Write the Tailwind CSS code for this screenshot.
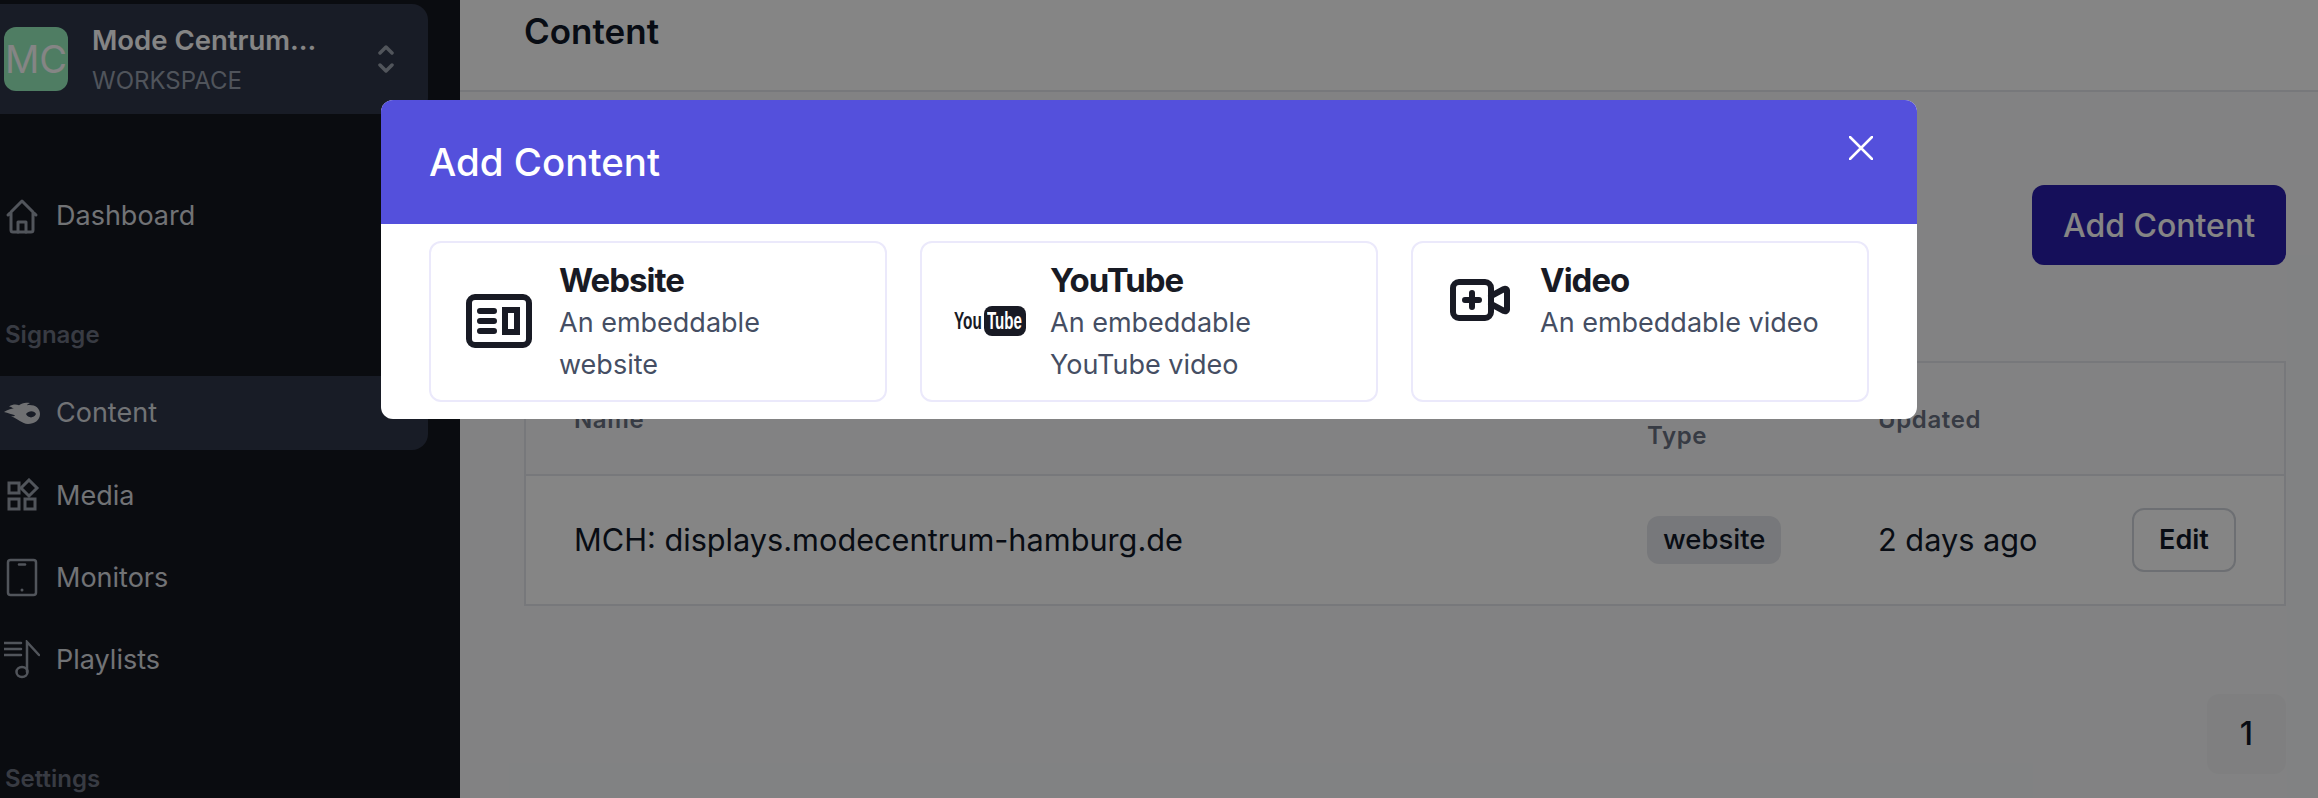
<!DOCTYPE html>
<html lang="en">
<head>
    <meta charset="UTF-8">
    <meta name="viewport" content="width=device-width, initial-scale=1.0">
    <title>Content</title>
    <script src="https://cdn.jsdelivr.net/npm/@tailwindcss/browser@4"></script>
</head>
<body class="font-['Inter',sans-serif] overflow-hidden">
    <div class="relative flex h-[798px] w-[2318px] overflow-hidden bg-[#f9fafb]">
        <!-- Sidebar -->
        <aside class="w-[460px] h-full shrink-0 bg-[#15171f] pt-[4px] pr-[32px]">
            <div class="h-[110px] flex items-center bg-[#2e3649] rounded-r-2xl pl-[4px]">
                <div class="w-16 h-16 rounded-xl bg-[#98f0be] flex items-center justify-center text-white text-[38px] shrink-0">MC</div>
                <div class="ml-[24px] flex-1">
                    <div class="text-white font-semibold text-[27.5px] leading-[38px]">Mode Centrum...</div>
                    <div class="text-gray-400 text-[24px] leading-[34px] mt-[5px]">WORKSPACE</div>
                </div>
                <svg class="w-[16px] h-[28px] mr-[34px]" viewBox="0 0 16 28" fill="none" stroke="#9ca3af" stroke-width="3.5" stroke-linecap="round" stroke-linejoin="round"><path d="M2 8l6-6 6 6M2 20l6 6 6-6"/></svg>
            </div>

            <nav class="mt-[65px] text-[#d9dce1] text-[27px]">
                <a class="h-[74px] flex items-center gap-4 pl-[4px]">
                    <svg class="w-9 h-9" viewBox="0 0 36 36" fill="none" stroke="#9ca3af" stroke-width="3" stroke-linejoin="round" stroke-linecap="round"><path d="M4 17L18 3l14 14M7 14v18a2 2 0 0 0 2 2h18a2 2 0 0 0 2-2V14"/><path d="M14 34V24h8v10"/></svg>
                    Dashboard
                </a>

                <div class="mt-[65px] mb-[24px] pl-[5px] h-[34px] leading-[34px] text-[#6b7280] font-semibold text-[24px]">Signage</div>

                <a class="h-[74px] flex items-center gap-4 pl-[4px] bg-[#2e3649] rounded-r-2xl">
                    <svg class="w-9 h-[22px]" viewBox="0 0 36 20" fill="#d5d7db" preserveAspectRatio="none"><path fill-rule="evenodd" d="M0 9C5 7 7 6 10 6C8 5 7 4 5 4C9 2 12 2 15 3C18 1 21 0 26 1C24 2 23 2.5 23 3C30 2 36 5 36 11C36 17 30 20 24 20C18 20 14 15 7 13C9 13 10 13 11 12C8 11 4 10 0 9ZM22 11C24 15 30 15 32 11C31 8 25 7 22 11Z"/></svg>
                    Content
                </a>

                <a class="mt-[9px] h-[74px] flex items-center gap-4 pl-[4px]">
                    <svg class="w-9 h-9" viewBox="0 0 36 36" fill="none" stroke="#9ca3af" stroke-width="3"><rect x="5" y="5" width="10" height="10"/><path d="M25 2l8 8-8 8-8-8z"/><rect x="5" y="21" width="10" height="10"/><rect x="21" y="21" width="10" height="10"/></svg>
                    Media
                </a>

                <a class="mt-[8px] h-[74px] flex items-center gap-4 pl-[4px]">
                    <svg class="w-9 h-[40px]" viewBox="0 0 36 40" fill="none" stroke="#9ca3af" stroke-width="2.5"><rect x="4" y="2" width="28" height="35" rx="2.5"/><path d="M15 6.5h6" stroke-linecap="round"/><circle cx="18" cy="32" r="1.5" fill="#9ca3af" stroke="none"/></svg>
                    Monitors
                </a>

                <a class="mt-[8px] h-[74px] flex items-center gap-4 pl-[4px]">
                    <svg class="w-9 h-[40px]" viewBox="0 0 36 40" fill="none" stroke="#9ca3af" stroke-width="2.5" stroke-linecap="round"><path d="M0 3h17M0 9h17M0 15h17"/><path d="M23 32V2l12 13"/><ellipse cx="18" cy="32" rx="5.5" ry="5"/></svg>
                    Playlists
                </a>

                <div class="mt-[65px] pl-[5px] h-[34px] leading-[34px] text-[#6b7280] font-semibold text-[24px]">Settings</div>
            </nav>
        </aside>

        <!-- Main -->
        <main class="flex-1 flex flex-col min-w-0">
            <header class="h-[92px] bg-white border-b-2 border-gray-200 pl-[64px] pt-[10px]">
                <h1 class="text-[35px] leading-[42px] font-semibold text-gray-900">Content</h1>
            </header>

            <div class="flex flex-col pl-[64px] pr-[32px]">
                <button class="self-end mt-[93px] w-[254px] h-[80px] pt-[2px] rounded-xl bg-[#2a1dad] text-white text-[32px] font-medium">Add Content</button>

                <div class="mt-[96px] border-2 border-gray-200 bg-white text-gray-900">
                    <div class="h-[113px] grid grid-cols-[1073px_231px_1fr] pl-[48px] bg-[#f9fafb] border-b-2 border-gray-200 text-gray-500 font-semibold text-[24px] tracking-wide leading-[30px]">
                        <div class="pt-[42px]">Name</div>
                        <div class="pt-[58px]">Type</div>
                        <div class="pt-[42px]">Updated</div>
                    </div>
                    <div class="h-[128px] grid grid-cols-[1073px_231px_1fr_auto] items-center pl-[48px] pr-[48px]">
                        <div class="text-[30.7px]">MCH: displays.modecentrum-hamburg.de</div>
                        <div><span class="inline-flex items-center h-[48px] px-4 rounded-xl bg-gray-200 text-[27.5px] font-medium">website</span></div>
                        <div class="text-[30.7px]">2 days ago</div>
                        <button class="w-[104px] h-[64px] rounded-xl border-2 border-gray-300 text-[27px] font-semibold">Edit</button>
                    </div>
                </div>

                <div class="self-end mt-[88px] w-[79px] h-[80px] rounded-xl bg-gray-100 flex items-center justify-center text-[32px] font-medium text-gray-900">1</div>
            </div>
        </main>

        <!-- Modal overlay -->
        <div class="absolute inset-0 bg-black/[.48]">
            <div class="absolute left-[381px] top-[100px] w-[1536px] h-[319px] bg-white rounded-xl overflow-hidden">
                <div class="h-[124px] bg-[#5450dc] flex items-center pl-[48px] pt-[2px]">
                    <h2 class="text-white text-[38.5px] font-medium">Add Content</h2>
                </div>
                <button class="absolute left-[1468px] top-[36px]">
                    <svg class="w-6 h-6" viewBox="0 0 24 24" fill="none" stroke="#fff" stroke-width="2.5" stroke-linecap="round"><path d="M1 1l22 22M23 1L1 23"/></svg>
                </button>

                <div class="grid grid-cols-3 gap-[33px] pl-[48px] pr-[48px] pt-[17px]">
                    <div class="h-[161px] border-2 border-[#ebe9fb] rounded-xl flex items-start pl-[28px] pt-[16px]">
                        <div class="flex items-center">
                            <div class="w-20 flex justify-center mb-[4px]">
                                <svg class="w-[66px] h-[54px]" viewBox="0 0 66 54" fill="none" stroke="#181a24" stroke-width="6"><rect x="3" y="3" width="60" height="48" rx="6"/><path d="M14 17h14M14 27h14M14 37h14" stroke-width="6" stroke-linecap="round"/><rect x="39" y="16" width="12" height="22"/></svg>
                            </div>
                            <div class="ml-[20px]">
                                <div class="text-[33px] leading-[43px] font-bold tracking-[-0.03em] text-[#181a24]">Website</div>
                                <div class="text-[27px] leading-[42px] text-[#454e63] w-[260px]">An embeddable website</div>
                            </div>
                        </div>
                    </div>

                    <div class="h-[161px] border-2 border-[#ebe9fb] rounded-xl flex items-start pl-[28px] pt-[16px]">
                        <div class="flex items-center">
                            <div class="w-20 flex justify-center mb-[4px]">
                                <div class="w-[72px] h-[30px] flex items-center font-['Liberation_Sans',sans-serif] font-bold text-[24px] leading-[30px]">
                                    <span class="inline-block w-[30px] whitespace-nowrap origin-left scale-x-[0.64] text-[#181a24]">You</span>
                                    <span class="inline-block w-[42px] h-[30px] rounded-lg bg-[#181a24] pl-[3px]"><span class="inline-block whitespace-nowrap origin-left scale-x-[0.63] text-white">Tube</span></span>
                                </div>
                            </div>
                            <div class="ml-[20px]">
                                <div class="text-[33px] leading-[43px] font-bold tracking-[-0.03em] text-[#181a24]">YouTube</div>
                                <div class="text-[27px] leading-[42px] text-[#454e63] w-[260px]">An embeddable YouTube video</div>
                            </div>
                        </div>
                    </div>

                    <div class="h-[161px] border-2 border-[#ebe9fb] rounded-xl flex items-start pl-[27px] pt-[16px]">
                        <div class="flex items-center">
                            <div class="w-20 flex justify-center mb-[4px]">
                                <svg class="w-[60px] h-[42px]" viewBox="0 0 60 42" fill="none" stroke="#181a24" stroke-width="6" stroke-linecap="round" stroke-linejoin="round"><rect x="3" y="3" width="38" height="36" rx="6"/><path d="M41 17l13-7a2 2 0 0 1 3 2v18a2 2 0 0 1-3 2l-13-7"/><path d="M22 14v14M15 21h14"/></svg>
                            </div>
                            <div class="ml-[20px]">
                                <div class="text-[33px] leading-[43px] font-bold tracking-[-0.03em] text-[#181a24]">Video</div>
                                <div class="text-[27px] leading-[42px] text-[#454e63]">An embeddable video</div>
                            </div>
                        </div>
                    </div>
                </div>
            </div>
        </div>
    </div>
</body>
</html>
